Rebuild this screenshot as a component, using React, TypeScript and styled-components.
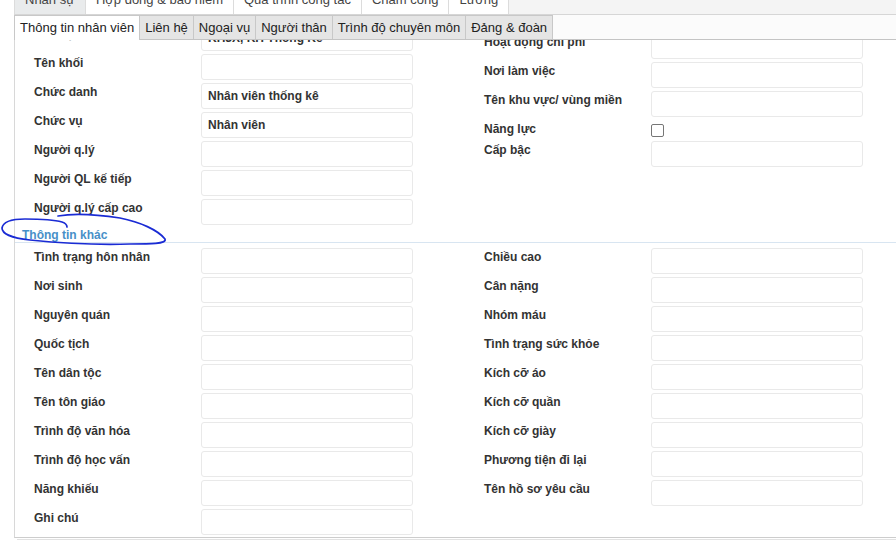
import React from 'react';
import styled, { createGlobalStyle } from 'styled-components';

const GlobalStyle = createGlobalStyle`
  html, body { margin: 0; padding: 0; background: #fff; overflow: hidden; }
  body { font-family: "Liberation Sans", Arial, sans-serif; color: #333; }
  * { box-sizing: border-box; }
`;

const Page = styled.div`
  position: relative;
  width: 896px;
  height: 541px;
  overflow: hidden;
  padding-left: 14px;
`;

const Frame = styled.div`
  width: 940px;
`;

const OuterBar = styled.div`
  display: flex;
  margin-top: -15px;
  height: 30px;
  background: #f4f4f4;
  border-bottom: 1px solid #d6d6d6;
  border-left: 1px solid #dcdcdc;
`;

const OuterTab = styled.div<{ $active?: boolean }>`
  padding: 0 10px;
  font-size: 13px;
  line-height: 29px;
  color: #444;
  white-space: nowrap;
  background: ${(p) => (p.$active ? '#e9ebec' : '#fff')};
  border-right: 1px solid #dcdcdc;
`;

const InnerBar = styled.div`
  display: flex;
  height: 25px;
  background: #fbfbfb;
  border-bottom: 1px solid #c4c4c4;
`;

const InnerTab = styled.div<{ $active?: boolean }>`
  padding: 0 5px;
  font-size: 13px;
  line-height: 23px;
  color: #222;
  white-space: nowrap;
  border: 1px solid #c8c8c8;
  border-bottom: none;
  margin-right: -1px;
  background: ${(p) => (p.$active ? '#fff' : '#e5e5e5')};
  height: ${(p) => (p.$active ? '25px' : '24px')};
  position: relative;
  z-index: ${(p) => (p.$active ? 1 : 0)};
`;

const Panel = styled.div`
  height: 498px;
  overflow: hidden;
  border-left: 1px solid #d8d8d8;
  border-bottom: 1px solid #cdcdcd;
`;

const Scroller = styled.div`
  margin-top: -15px;
`;

const Columns = styled.div`
  display: grid;
  grid-template-columns: 450px 450px;
`;

const Column = styled.div<{ $offset?: number }>`
  display: flex;
  flex-direction: column;
  gap: 3px;
  padding-left: 19px;
  padding-top: ${(p) => p.$offset ?? 0}px;
`;

const Row = styled.div`
  display: flex;
  align-items: flex-start;
`;

const Label = styled.div`
  width: 167px;
  padding-top: 1px;
  font-size: 12px;
  font-weight: bold;
  line-height: 17px;
  color: #333;
  white-space: nowrap;
`;

const Field = styled.div`
  width: 212px;
  height: 26px;
  border: 1px solid #e9e9e9;
  border-radius: 3px;
  background: #fff;
  padding: 0 6px;
  font-size: 12px;
  font-weight: bold;
  line-height: 24px;
  color: #333;
  white-space: nowrap;
  overflow: hidden;
`;

const CheckBox = styled.span`
  display: block;
  width: 13px;
  height: 13px;
  margin-top: 4px;
  border: 1px solid #767676;
  border-radius: 2px;
  background: #fff;
`;

const SectionHeader = styled.div`
  margin: 3px 0 5px;
  padding-left: 7px;
  font-size: 12px;
  font-weight: bold;
  line-height: 14px;
  color: #4790c8;
  border-bottom: 1px solid #d8e5f1;
`;

const FooterRule = styled.div`
  margin-top: 1px;
  margin-left: 3px;
  border-top: 1px solid #e2e2e2;
`;

const Annotation = styled.svg`
  position: absolute;
  left: 0;
  top: 0;
  pointer-events: none;
`;

type Item = { label: string; value?: string; check?: boolean };

const sec1Left: Item[] = [
  { label: 'Đơn vị', value: 'KH3X, KH Thống Kê' },
  { label: 'Tên khối' },
  { label: 'Chức danh', value: 'Nhân viên thống kê' },
  { label: 'Chức vụ', value: 'Nhân viên' },
  { label: 'Người q.lý' },
  { label: 'Người QL kế tiếp' },
  { label: 'Người q.lý cấp cao' },
];

const sec1Right: Item[] = [
  { label: 'Hoạt động chi phí' },
  { label: 'Nơi làm việc' },
  { label: 'Tên khu vực/ vùng miền' },
  { label: 'Năng lực', check: true },
  { label: 'Cấp bậc' },
];

const sec2Left: Item[] = [
  { label: 'Tình trạng hôn nhân' },
  { label: 'Nơi sinh' },
  { label: 'Nguyên quán' },
  { label: 'Quốc tịch' },
  { label: 'Tên dân tộc' },
  { label: 'Tên tôn giáo' },
  { label: 'Trình độ văn hóa' },
  { label: 'Trình độ học vấn' },
  { label: 'Năng khiếu' },
  { label: 'Ghi chú' },
];

const sec2Right: Item[] = [
  { label: 'Chiều cao' },
  { label: 'Cân nặng' },
  { label: 'Nhóm máu' },
  { label: 'Tình trạng sức khỏe' },
  { label: 'Kích cỡ áo' },
  { label: 'Kích cỡ quần' },
  { label: 'Kích cỡ giày' },
  { label: 'Phương tiện đi lại' },
  { label: 'Tên hồ sơ yêu cầu' },
];

const outerTabs = ['Nhân sự', 'Hợp đồng & bảo hiểm', 'Quá trình công tác', 'Chấm công', 'Lương'];
const innerTabs = ['Thông tin nhân viên', 'Liên hệ', 'Ngoại vụ', 'Người thân', 'Trình độ chuyên môn', 'Đảng & đoàn'];

const FormColumn = ({ items, offset }: { items: Item[]; offset?: number }) => (
  <Column $offset={offset}>
    {items.map((it) => (
      <Row key={it.label}>
        <Label>{it.label}</Label>
        {it.check ? <CheckBox /> : <Field>{it.value ?? ''}</Field>}
      </Row>
    ))}
  </Column>
);

export default function App() {
  return (
    <>
      <GlobalStyle />
      <Page>
        <Frame>
          <OuterBar>
            {outerTabs.map((t, i) => (
              <OuterTab key={t} $active={i === 0}>{t}</OuterTab>
            ))}
          </OuterBar>
          <InnerBar>
            {innerTabs.map((t, i) => (
              <InnerTab key={t} $active={i === 0}>{t}</InnerTab>
            ))}
          </InnerBar>
          <Panel>
            <Scroller>
              <Columns>
                <FormColumn items={sec1Left} />
                <FormColumn items={sec1Right} offset={8} />
              </Columns>
              <SectionHeader>Thông tin khác</SectionHeader>
              <Columns>
                <FormColumn items={sec2Left} />
                <FormColumn items={sec2Right} />
              </Columns>
            </Scroller>
          </Panel>
          <FooterRule />
        </Frame>
        <Annotation width="200" height="260" viewBox="0 0 200 260">
          <path
            d="M58,216 C75,213 100,215 120,218 C140,222 158,230 165,239 C167,244 150,244 130,244 C100,245 60,243 30,240 C10,238 2,233 2,228 C3,222 12,219 25,219 C40,219 55,220 62,222 C65,223 67,225 67,227"
            fill="none"
            stroke="#1a2bd4"
            strokeWidth="1.7"
            strokeLinecap="round"
          />
        </Annotation>
      </Page>
    </>
  );
}
